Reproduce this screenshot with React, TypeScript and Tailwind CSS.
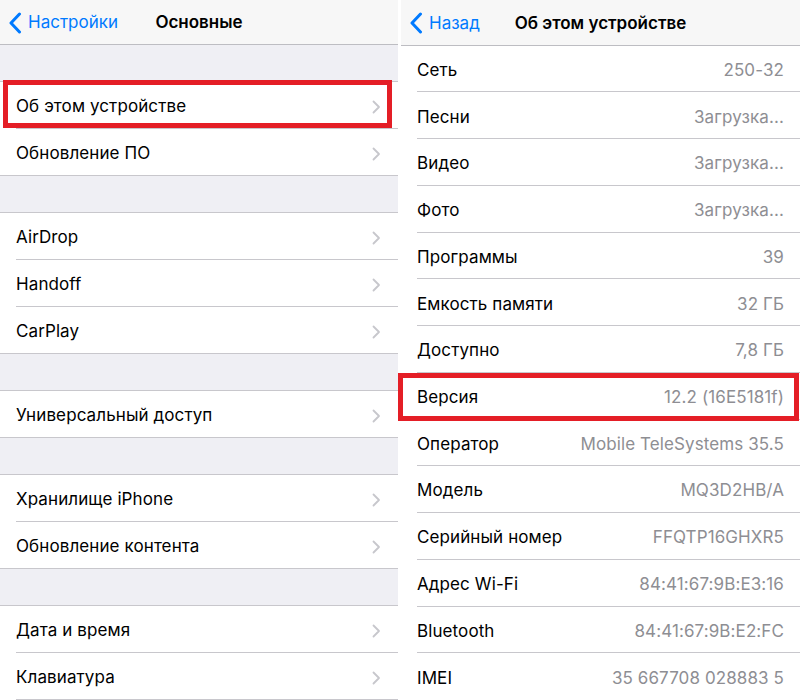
import React from "react";

const font = { fontFamily: "Inter, 'Noto Sans', sans-serif" };

function Chevron() {
  return (
    <svg width="9" height="14" viewBox="0 0 9 14" className="shrink-0">
      <path d="M1.5 1.5 L7 7 L1.5 12.5" fill="none" stroke="#c7c7cc" strokeWidth="1.8" strokeLinecap="round" strokeLinejoin="round" />
    </svg>
  );
}

function BackChevron() {
  return (
    <svg width="14" height="22" viewBox="0 0 14 22" className="shrink-0">
      <path d="M11.5 2 L3 11 L11.5 20" fill="none" stroke="#007aff" strokeWidth="3" strokeLinecap="round" strokeLinejoin="round" />
    </svg>
  );
}

function Header({ back, title, h }: { back: string; title: string; h: string }) {
  return (
    <div className={`relative flex items-center bg-[#f7f7f7] border-b border-[#bdbdc2] ${h}`}>
      <div className="flex items-center gap-[6px] pl-[8px] pt-[2px] text-[17px] text-[#007aff]">
        <BackChevron />
        <span>{back}</span>
      </div>
      <div className="absolute inset-x-0 top-0 bottom-0 flex items-center justify-center pt-[2px] pointer-events-none">
        <span className="text-[17px] font-semibold text-black">{title}</span>
      </div>
    </div>
  );
}

function Gap() {
  return <div className="h-[37px] bg-[#efeff4] border-b border-[#c8c7cc]" />;
}

function NavRow({ label, last }: { label: string; last?: boolean }) {
  return (
    <div className={`h-[47px] flex bg-white pl-[16px] ${last ? "border-b border-[#c8c7cc]" : ""}`}>
      <div className={`flex-1 flex items-center justify-between pr-[17px] pt-[4px] ${last ? "" : "border-b border-[#c8c7cc]"}`}>
        <span className="text-[17px] tracking-[0.1px] text-black">{label}</span>
        <Chevron />
      </div>
    </div>
  );
}

function InfoRow({ label, value, last }: { label: string; value: string; last?: boolean }) {
  return (
    <div className="h-[47px] flex bg-white pl-[16px]">
      <div className={`flex-1 flex items-center justify-between pr-[16px] pt-[4px] ${last ? "" : "border-b border-[#c8c7cc]"}`}>
        <span className="text-[17px] tracking-[0.1px] text-black">{label}</span>
        <span className="text-[17px] tracking-[0.1px] text-[#8e8e93]">{value}</span>
      </div>
    </div>
  );
}

const info: [string, string][] = [
  ["Сеть", "250-32"],
  ["Песни", "Загрузка..."],
  ["Видео", "Загрузка..."],
  ["Фото", "Загрузка..."],
  ["Программы", "39"],
  ["Емкость памяти", "32 ГБ"],
  ["Доступно", "7,8 ГБ"],
  ["Версия", "12.2 (16E5181f)"],
  ["Оператор", "Mobile TeleSystems 35.5"],
  ["Модель", "MQ3D2HB/A"],
  ["Серийный номер", "FFQTP16GHXR5"],
  ["Адрес Wi-Fi", "84:41:67:9B:E3:16"],
  ["Bluetooth", "84:41:67:9B:E2:FC"],
  ["IMEI", "35 667708 028883 5"],
];

export default function App() {
  return (
    <div className="relative w-[800px] h-[700px] overflow-hidden bg-white flex" style={font}>
      <div className="w-[398px] h-full bg-[#efeff4] flex flex-col">
        <Header back="Настройки" title="Основные" h="h-[45px]" />
        <Gap />
        <NavRow label="Об этом устройстве" />
        <NavRow label="Обновление ПО" last />
        <Gap />
        <NavRow label="AirDrop" />
        <NavRow label="Handoff" />
        <NavRow label="CarPlay" last />
        <Gap />
        <NavRow label="Универсальный доступ" last />
        <Gap />
        <NavRow label="Хранилище iPhone" />
        <NavRow label="Обновление контента" last />
        <Gap />
        <NavRow label="Дата и время" />
        <NavRow label="Клавиатура" />
      </div>
      <div className="w-[3px]" />
      <div className="flex-1 h-full bg-white flex flex-col">
        <Header back="Назад" title="Об этом устройстве" h="h-[46px]" />
        {info.map(([l, v], i) => (
          <InfoRow key={l} label={l} value={v} last={i === info.length - 1} />
        ))}
      </div>
      <div className="absolute left-[3px] top-[80px] w-[389px] h-[48px] border-[5px] border-[#e41e26]" />
      <div className="absolute left-[398px] top-[373px] w-[401px] h-[48px] border-[5px] border-[#e41e26]" />
    </div>
  );
}
